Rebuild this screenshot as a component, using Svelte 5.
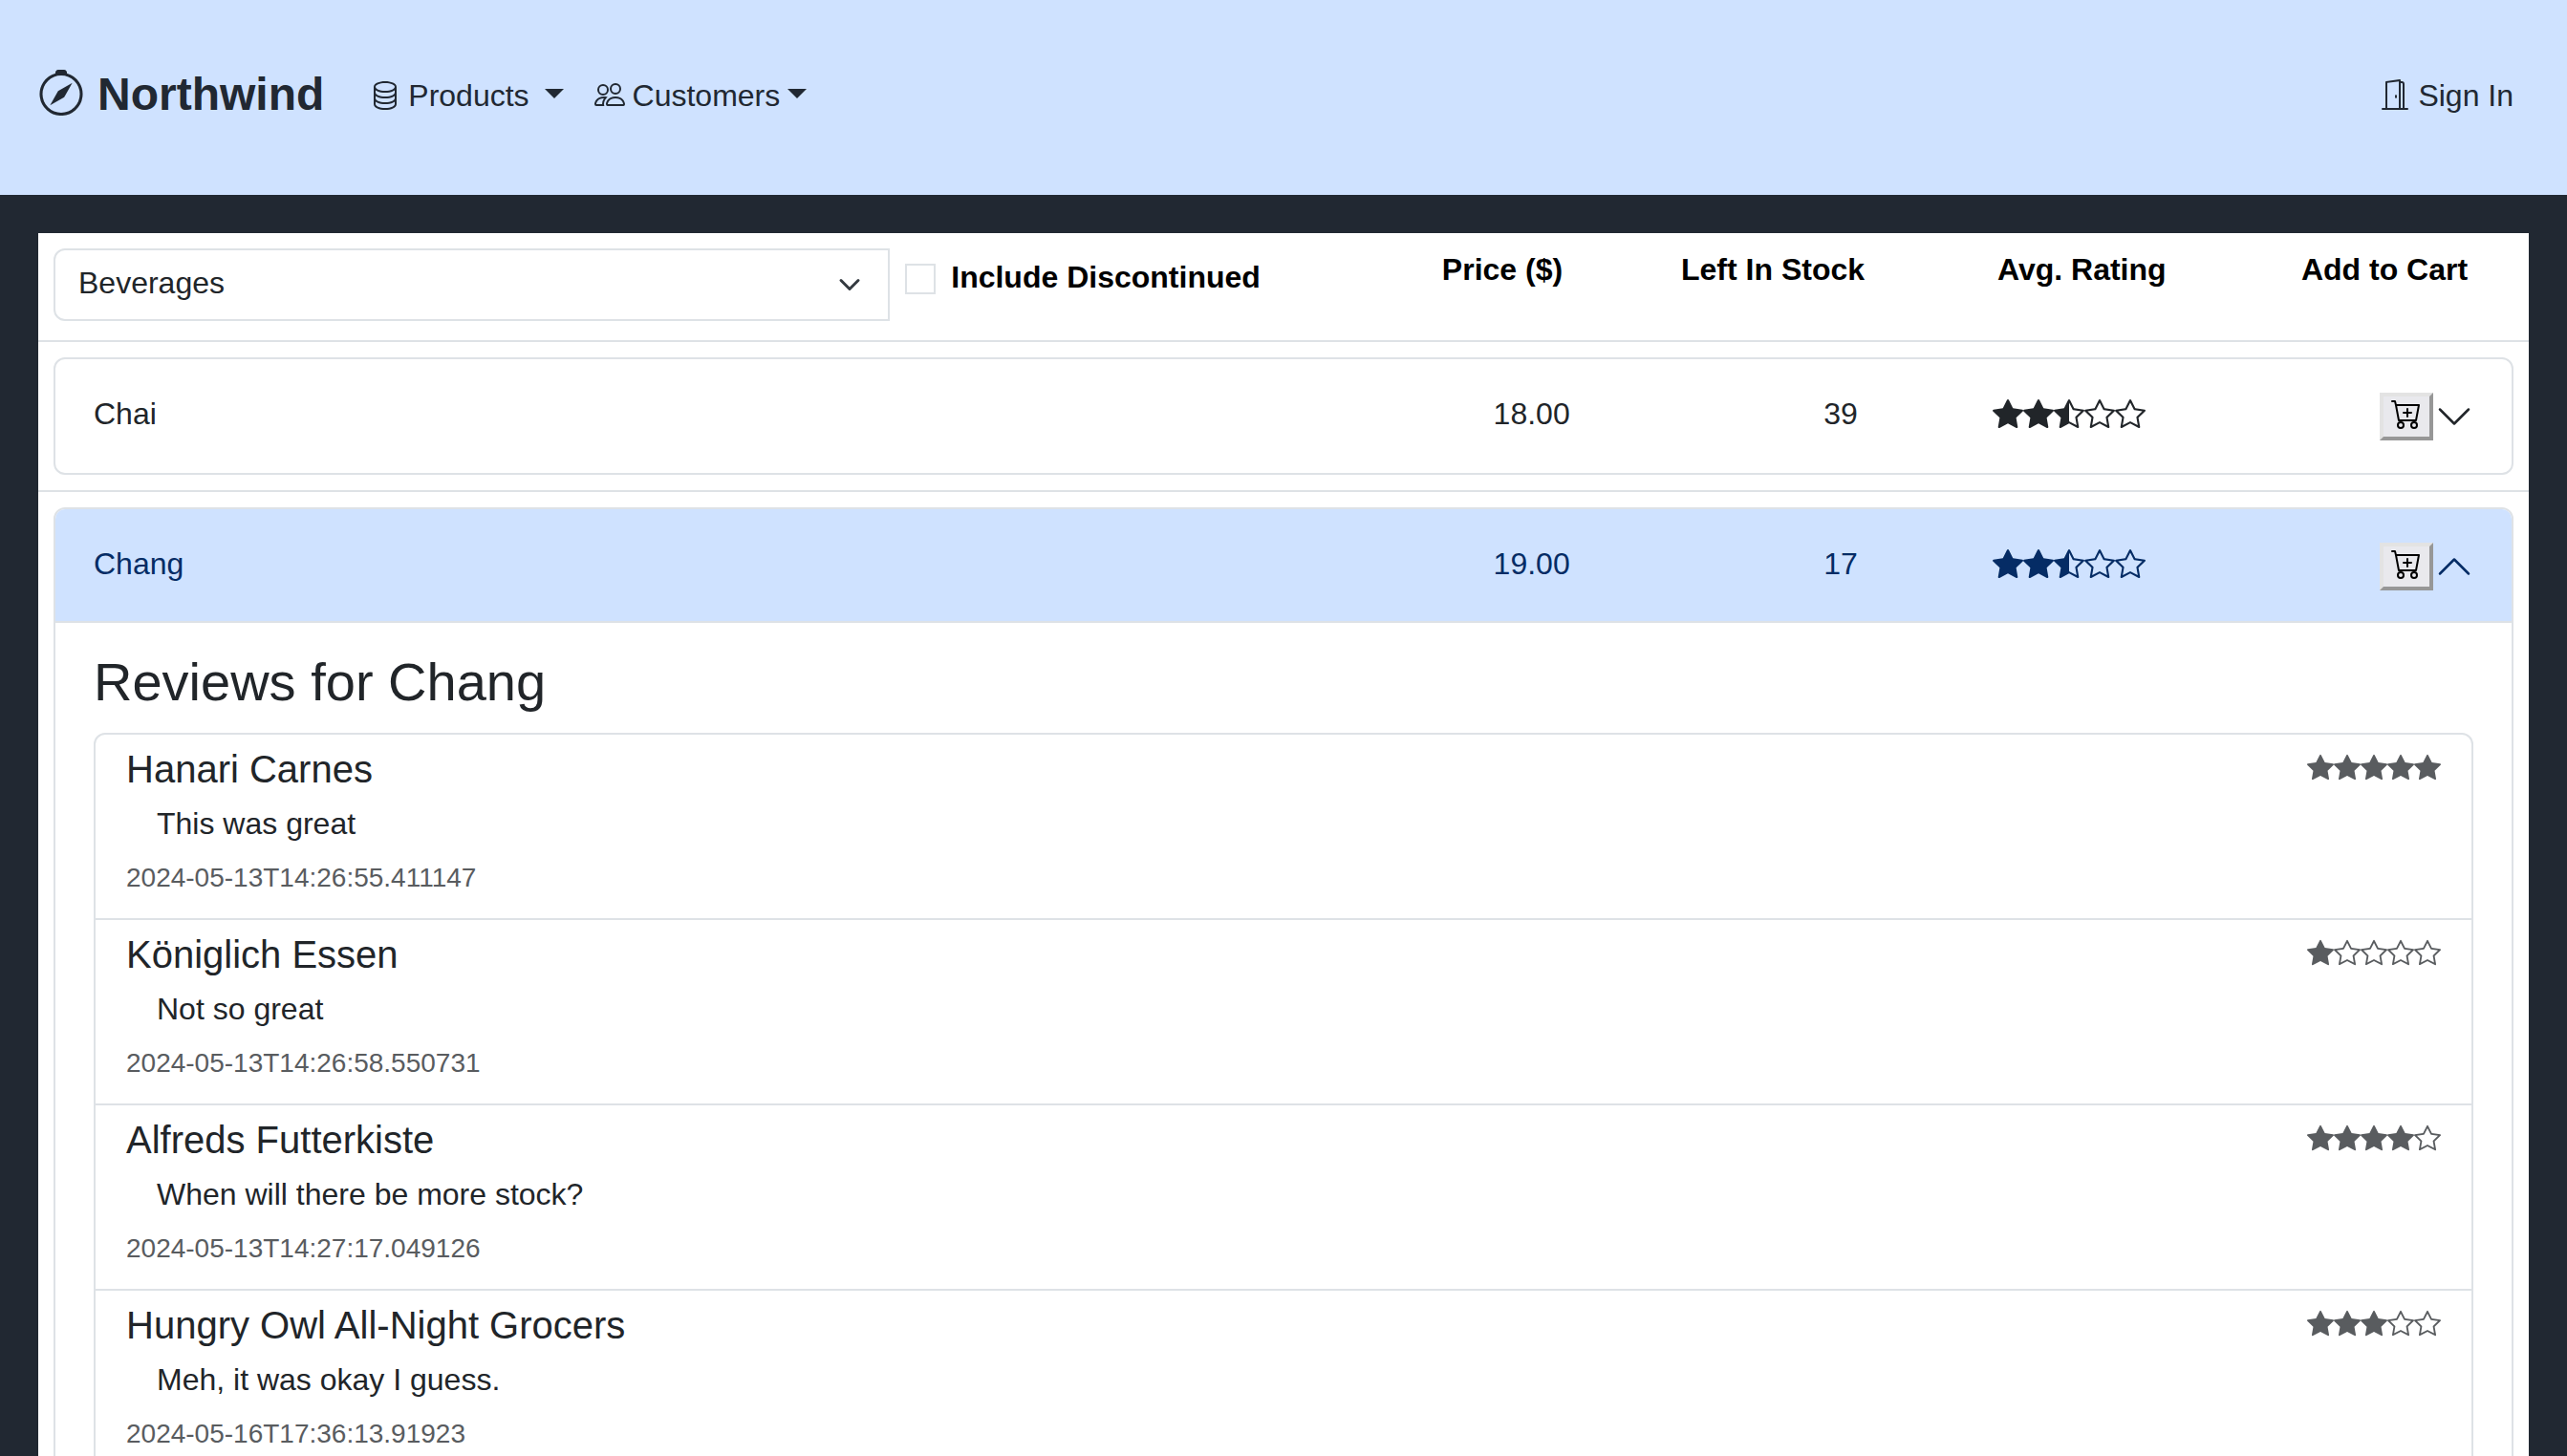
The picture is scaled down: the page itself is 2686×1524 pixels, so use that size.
<script>
  const starFull =
    'M3.612 15.443c-.386.198-.824-.149-.746-.592l.83-4.73L.173 6.765c-.329-.314-.158-.888.283-.95l4.898-.696L7.538.792c.197-.39.73-.39.927 0l2.184 4.327 4.898.696c.441.062.612.636.282.95l-3.522 3.356.83 4.73c.078.443-.36.79-.746.592L8 13.187l-4.389 2.256z';
  const starEmpty =
    'M2.866 14.85c-.078.444.36.791.746.593l4.39-2.256 4.389 2.256c.386.198.824-.149.746-.592l-.83-4.73 3.522-3.356c.33-.314.16-.888-.282-.95l-4.898-.696L8.465.792a.513.513 0 0 0-.927 0L5.354 5.12l-4.898.696c-.441.062-.612.636-.283.95l3.523 3.356-.83 4.73zm4.905-2.767-3.686 1.894.694-3.957a.56.56 0 0 0-.163-.505L1.71 6.745l4.052-.576a.53.53 0 0 0 .393-.288L8 2.223l1.847 3.658a.53.53 0 0 0 .393.288l4.052.575-2.906 2.77a.56.56 0 0 0-.163.506l.694 3.957-3.686-1.894a.5.5 0 0 0-.461 0z';
  const starHalf =
    'M5.354 5.119 7.538.792A.52.52 0 0 1 8 .5c.183 0 .366.097.465.292l2.184 4.327 4.898.696A.54.54 0 0 1 16 6.32a.55.55 0 0 1-.17.445l-3.523 3.356.83 4.73c.078.443-.36.79-.746.592L8 13.187l-4.389 2.256a.5.5 0 0 1-.146.05c-.342.06-.668-.254-.6-.642l.83-4.73L.173 6.765a.55.55 0 0 1-.172-.403.6.6 0 0 1 .085-.302.51.51 0 0 1 .37-.245zM8 12.027a.5.5 0 0 1 .232.056l3.686 1.894-.694-3.957a.56.56 0 0 1 .162-.505l2.907-2.77-4.052-.576a.53.53 0 0 1-.393-.288L8.001 2.223 8 2.226z';

  const products = [
    { name: 'Chai', price: '18.00', stock: 39, rating: 2.5 },
    { name: 'Chang', price: '19.00', stock: 17, rating: 2.5 },
  ];

  const reviews = [
    { name: 'Hanari Carnes', text: 'This was great', date: '2024-05-13T14:26:55.411147', rating: 5 },
    { name: 'Königlich Essen', text: 'Not so great', date: '2024-05-13T14:26:58.550731', rating: 1 },
    { name: 'Alfreds Futterkiste', text: 'When will there be more stock?', date: '2024-05-13T14:27:17.049126', rating: 4 },
    { name: 'Hungry Owl All-Night Grocers', text: 'Meh, it was okay I guess.', date: '2024-05-16T17:36:13.91923', rating: 3 },
  ];

  let open = $state('Chang');
  let discontinued = $state(false);

  function toggle(name) {
    open = open === name ? '' : name;
  }

  function starPath(rating, i) {
    if (rating >= i) return starFull;
    return rating >= i - 0.5 ? starHalf : starEmpty;
  }
</script>

{#snippet stars(rating)}
  <span class="stars" role="img" aria-label="{rating} out of 5">
    {#each [1, 2, 3, 4, 5] as i}
      <svg viewBox="0 0 16 16"><path d={starPath(rating, i)} /></svg>
    {/each}
  </span>
{/snippet}

<header class="navbar">
  <a class="brand" href="#home">
    <svg class="brand-icon" viewBox="0 0 16 16" aria-hidden="true">
      <path d="M8 16.016a7.5 7.5 0 0 0 1.962-14.74A1 1 0 0 0 9 0H7a1 1 0 0 0-.962 1.276A7.5 7.5 0 0 0 8 16.016m6.5-7.5a6.5 6.5 0 1 1-13 0 6.5 6.5 0 0 1 13 0" />
      <path d="m6.94 7.44 4.95-2.83-2.83 4.95-4.949 2.83z" />
    </svg>
    Northwind
  </a>
  <nav>
    <button class="nav-link">
      <svg class="icon" viewBox="0 0 16 16" aria-hidden="true">
        <path d="M4.318 2.687C5.234 2.271 6.536 2 8 2s2.766.27 3.682.687C12.644 3.125 13 3.627 13 4c0 .374-.356.875-1.318 1.313C10.766 5.729 9.464 6 8 6s-2.766-.27-3.682-.687C3.356 4.875 3 4.373 3 4c0-.374.356-.875 1.318-1.313M13 5.698V7c0 .374-.356.875-1.318 1.313C10.766 8.729 9.464 9 8 9s-2.766-.27-3.682-.687C3.356 7.875 3 7.373 3 7V5.698c.271.202.58.378.904.525C4.978 6.711 6.427 7 8 7s3.022-.289 4.096-.777A5 5 0 0 0 13 5.698M14 4c0-1.007-.875-1.755-1.904-2.223C11.022 1.289 9.573 1 8 1s-3.022.289-4.096.777C2.875 2.245 2 2.993 2 4v9c0 1.007.875 1.755 1.904 2.223C4.978 15.71 6.427 16 8 16s3.022-.289 4.096-.777C13.125 14.755 14 14.007 14 13zm-1 4.698V10c0 .374-.356.875-1.318 1.313C10.766 11.729 9.464 12 8 12s-2.766-.27-3.682-.687C3.356 10.875 3 10.373 3 10V8.698c.271.202.58.378.904.525C4.978 9.71 6.427 10 8 10s3.022-.289 4.096-.777A5 5 0 0 0 13 8.698m0 3V13c0 .374-.356.875-1.318 1.313C10.766 14.729 9.464 15 8 15s-2.766-.27-3.682-.687C3.356 13.875 3 13.373 3 13v-1.302c.271.202.58.378.904.525C4.978 12.71 6.427 13 8 13s3.022-.289 4.096-.777c.324-.147.633-.323.904-.525" />
      </svg>
      Products
      <span class="caret wide"></span>
    </button>
    <button class="nav-link">
      <svg class="icon" viewBox="0 0 16 16" aria-hidden="true">
        <path d="M15 14s1 0 1-1-1-4-5-4-5 3-5 4 1 1 1 1zm-7.978-1L7 12.996c.001-.264.167-1.03.76-1.72C8.312 10.629 9.282 10 11 10c1.717 0 2.687.63 3.24 1.276.593.69.758 1.457.76 1.72l-.008.002-.014.002zM11 7a2 2 0 1 0 0-4 2 2 0 0 0 0 4m3-2a3 3 0 1 1-6 0 3 3 0 0 1 6 0M6.936 9.28a6 6 0 0 0-1.23-.247A7 7 0 0 0 5 9c-4 0-5 3-5 4q0 1 1 1h4.216A2.24 2.24 0 0 1 5 13c0-1.01.377-2.042 1.09-2.904.243-.294.526-.569.846-.816M4.92 10A5.5 5.5 0 0 0 4 13H1c0-.26.164-1.03.76-1.724.545-.636 1.492-1.256 3.16-1.275ZM1.5 5.5a3 3 0 1 1 6 0 3 3 0 0 1-6 0m3-2a2 2 0 1 0 0 4 2 2 0 0 0 0-4" />
      </svg>
      Customers
      <span class="caret"></span>
    </button>
  </nav>
  <a class="nav-link sign-in" href="#signin">
    <svg class="icon" viewBox="0 0 16 16" aria-hidden="true">
      <path d="M8.5 10c-.276 0-.5-.448-.5-1s.224-1 .5-1 .5.448.5 1-.224 1-.5 1" />
      <path d="M10.828.122A.5.5 0 0 1 11 .5V1h.5A1.5 1.5 0 0 1 13 2.5V15h1.5a.5.5 0 0 1 0 1h-13a.5.5 0 0 1 0-1H3V1.5a.5.5 0 0 1 .43-.495l7-1a.5.5 0 0 1 .398.117M11.5 2H11v13h1V2.5a.5.5 0 0 0-.5-.5M4 1.934V15h6V1.077z" />
    </svg>
    Sign In
  </a>
</header>

<main>
  <table>
    <colgroup>
      <col class="col-filter" />
      <col class="col-price" />
      <col class="col-stock" />
      <col class="col-rating" />
      <col />
    </colgroup>
    <thead>
      <tr>
        <th>
          <div class="filters">
            <div class="select-wrap">
              <select aria-label="Category">
                <option>Beverages</option>
                <option>Condiments</option>
                <option>Confections</option>
              </select>
              <svg viewBox="0 0 16 16" aria-hidden="true"><path d="m2 5 6 6 6-6" /></svg>
            </div>
            <label class="check">
              <input type="checkbox" bind:checked={discontinued} />
              Include Discontinued
            </label>
          </div>
        </th>
        <th>Price ($)</th>
        <th>Left In Stock</th>
        <th>Avg. Rating</th>
        <th>Add to Cart</th>
      </tr>
    </thead>
    <tbody>
      {#each products as product}
        <tr>
          <td colspan="5">
            <article class="item" class:open={open === product.name}>
              <div class="item-header">
                <button class="name" onclick={() => toggle(product.name)}>{product.name}</button>
                <span class="cell">{product.price}</span>
                <span class="cell">{product.stock}</span>
                <span class="cell">{@render stars(product.rating)}</span>
                <button class="cart" aria-label="Add {product.name} to cart">
                  <svg class="icon" viewBox="0 0 16 16" aria-hidden="true">
                    <path d="M9 5.5a.5.5 0 0 0-1 0V7H6.5a.5.5 0 0 0 0 1H8v1.5a.5.5 0 0 0 1 0V8h1.5a.5.5 0 0 0 0-1H9z" />
                    <path d="M.5 1a.5.5 0 0 0 0 1h1.11l.401 1.607 1.498 7.985A.5.5 0 0 0 4 12h1a2 2 0 1 0 0 4 2 2 0 0 0 0-4h7a2 2 0 1 0 0 4 2 2 0 0 0 0-4h1a.5.5 0 0 0 .491-.408l1.5-8A.5.5 0 0 0 14.5 3H2.89l-.405-1.621A.5.5 0 0 0 2 1zm3.915 10L3.102 4h10.796l-1.313 7zM6 14a1 1 0 1 1-2 0 1 1 0 0 1 2 0m7 0a1 1 0 1 1-2 0 1 1 0 0 1 2 0" />
                  </svg>
                </button>
                <button
                  class="chevron"
                  aria-label="Reviews for {product.name}"
                  aria-expanded={open === product.name}
                  onclick={() => toggle(product.name)}
                >
                  <svg viewBox="0 0 16 16" aria-hidden="true"><path d="m2 5 6 6 6-6" /></svg>
                </button>
              </div>
              {#if open === product.name}
                <section class="item-body">
                  <h3>Reviews for {product.name}</h3>
                  <ul>
                    {#each reviews as review}
                      <li>
                        <div>
                          <h5>{review.name}</h5>
                          <p>{review.text}</p>
                          <time>{review.date}</time>
                        </div>
                        <small>{@render stars(review.rating)}</small>
                      </li>
                    {/each}
                  </ul>
                </section>
              {/if}
            </article>
          </td>
        </tr>
      {/each}
    </tbody>
  </table>
</main>

<style>
  :global(html) {
    scrollbar-width: none;
  }

  :global(body) {
    background: #212832;
    color: #212529;
    font-family: 'Liberation Sans', Arial, sans-serif;
    font-size: 32px;
    line-height: 48px;
  }

  button,
  select,
  input {
    margin: 0;
    padding: 0;
    border: 0;
    background: none;
    color: inherit;
    font: inherit;
    appearance: none;
  }

  svg {
    display: block;
    flex: none;
    fill: currentColor;
  }

  .icon {
    width: 32px;
    height: 32px;
  }

  .navbar {
    display: flex;
    align-items: center;
    padding: 73px 40px 79px;
    background: #cfe2ff;
    color: #212832;
  }

  .brand {
    display: flex;
    align-items: center;
    gap: 14px;
    height: 52px;
    margin-right: 32px;
    color: inherit;
    font-size: 48px;
    font-weight: 700;
    line-height: 48px;
    text-decoration: none;
  }

  .brand-icon {
    width: 48px;
    height: 48px;
    margin-bottom: 4px;
  }

  nav {
    display: flex;
  }

  .nav-link {
    display: flex;
    align-items: center;
    gap: 8px;
    padding: 2px 16px 0;
    color: inherit;
    text-decoration: none;
  }

  .nav-link .icon {
    margin-bottom: 2px;
  }

  .sign-in {
    margin-left: auto;
  }

  .caret {
    margin-bottom: 4px;
    border: 10px solid transparent;
    border-top-color: currentColor;
    border-bottom: 0;
  }

  .caret.wide {
    margin-left: 8px;
  }

  main {
    margin: 40px;
    background: #fff;
  }

  table {
    width: 100%;
    table-layout: fixed;
    border-collapse: separate;
    border-spacing: 0;
  }

  .col-filter {
    width: 55.75%;
  }

  .col-price {
    width: 9.6%;
  }

  .col-stock {
    width: 12.7%;
  }

  .col-rating {
    width: 12.2%;
  }

  th,
  td {
    padding: 16px;
    border-bottom: 2px solid #dee2e6;
  }

  th {
    height: 80px;
    color: #000;
    font-weight: 700;
    line-height: 44px;
    text-align: left;
    vertical-align: top;
  }

  .filters {
    display: flex;
    align-items: flex-start;
    gap: 16px;
  }

  .select-wrap {
    display: grid;
    width: 61.6%;
    align-items: center;
  }

  .select-wrap > * {
    grid-area: 1 / 1;
  }

  .select-wrap svg {
    width: 24px;
    height: 24px;
    margin-right: 30px;
    justify-self: end;
    fill: none;
    stroke: #343a40;
    stroke-width: 2;
    stroke-linecap: round;
    stroke-linejoin: round;
    pointer-events: none;
  }

  select {
    height: 76px;
    padding: 0 72px 4px 24px;
    border: 2px solid #dee2e6;
    border-radius: 12px 0 0 12px;
    color: #212529;
    font-weight: 400;
  }

  .check {
    display: flex;
    align-items: center;
    gap: 16px;
    padding-top: 8px;
  }

  .check input {
    width: 32px;
    height: 32px;
    margin-top: 4px;
    border: 2px solid #dee2e6;
  }

  .check input:checked {
    background: #0d6efd;
  }

  .item {
    overflow: hidden;
    border: 2px solid #dee2e6;
    border-radius: 12px;
  }

  .item-header {
    display: grid;
    grid-template-columns: 413fr repeat(4, 100fr) 42px;
    align-items: center;
    height: 119px;
    padding: 0 40px;
  }

  .open .item-header {
    background: #cfe2ff;
    box-shadow: inset 0 -2px #dee2e6;
    color: #052c65;
  }

  .name {
    padding-bottom: 6px;
    text-align: left;
  }

  .cell {
    display: flex;
    justify-content: flex-end;
    padding-bottom: 6px;
  }

  .stars {
    display: flex;
    align-items: center;
  }

  .stars svg {
    width: 32px;
    height: 32px;
  }

  .cart {
    justify-self: end;
    padding: 2px 8px 8px;
    border: 4px solid;
    border-color: #e3e3e3 #979797 #979797 #e3e3e3;
    background: #e9e9ed;
    color: #000;
  }

  .chevron {
    justify-self: end;
  }

  .chevron svg {
    width: 40px;
    height: 40px;
    fill: none;
    stroke: currentColor;
    stroke-linecap: round;
    stroke-linejoin: round;
  }

  .open .chevron svg {
    transform: rotate(180deg);
  }

  .item-body {
    padding: 28px 40px 32px;
  }

  h3 {
    margin: 0 0 20px;
    font-size: 56px;
    font-weight: 400;
    line-height: 67px;
  }

  ul {
    margin: 0;
    padding: 0;
    border: 2px solid #dee2e6;
    border-radius: 12px;
    list-style: none;
  }

  li {
    display: flex;
    justify-content: space-between;
    padding: 12px 32px 18px;
  }

  li + li {
    border-top: 2px solid #dee2e6;
  }

  h5 {
    margin: 0 0 9px;
    font-size: 40px;
    font-weight: 400;
    line-height: 48px;
  }

  p {
    margin: 0 0 9px;
    padding-left: 32px;
  }

  time {
    display: block;
    color: #595c5f;
    font-size: 28px;
  }

  small {
    padding-top: 8px;
    color: #595c5f;
  }

  small .stars svg {
    width: 28px;
    height: 28px;
  }
</style>
